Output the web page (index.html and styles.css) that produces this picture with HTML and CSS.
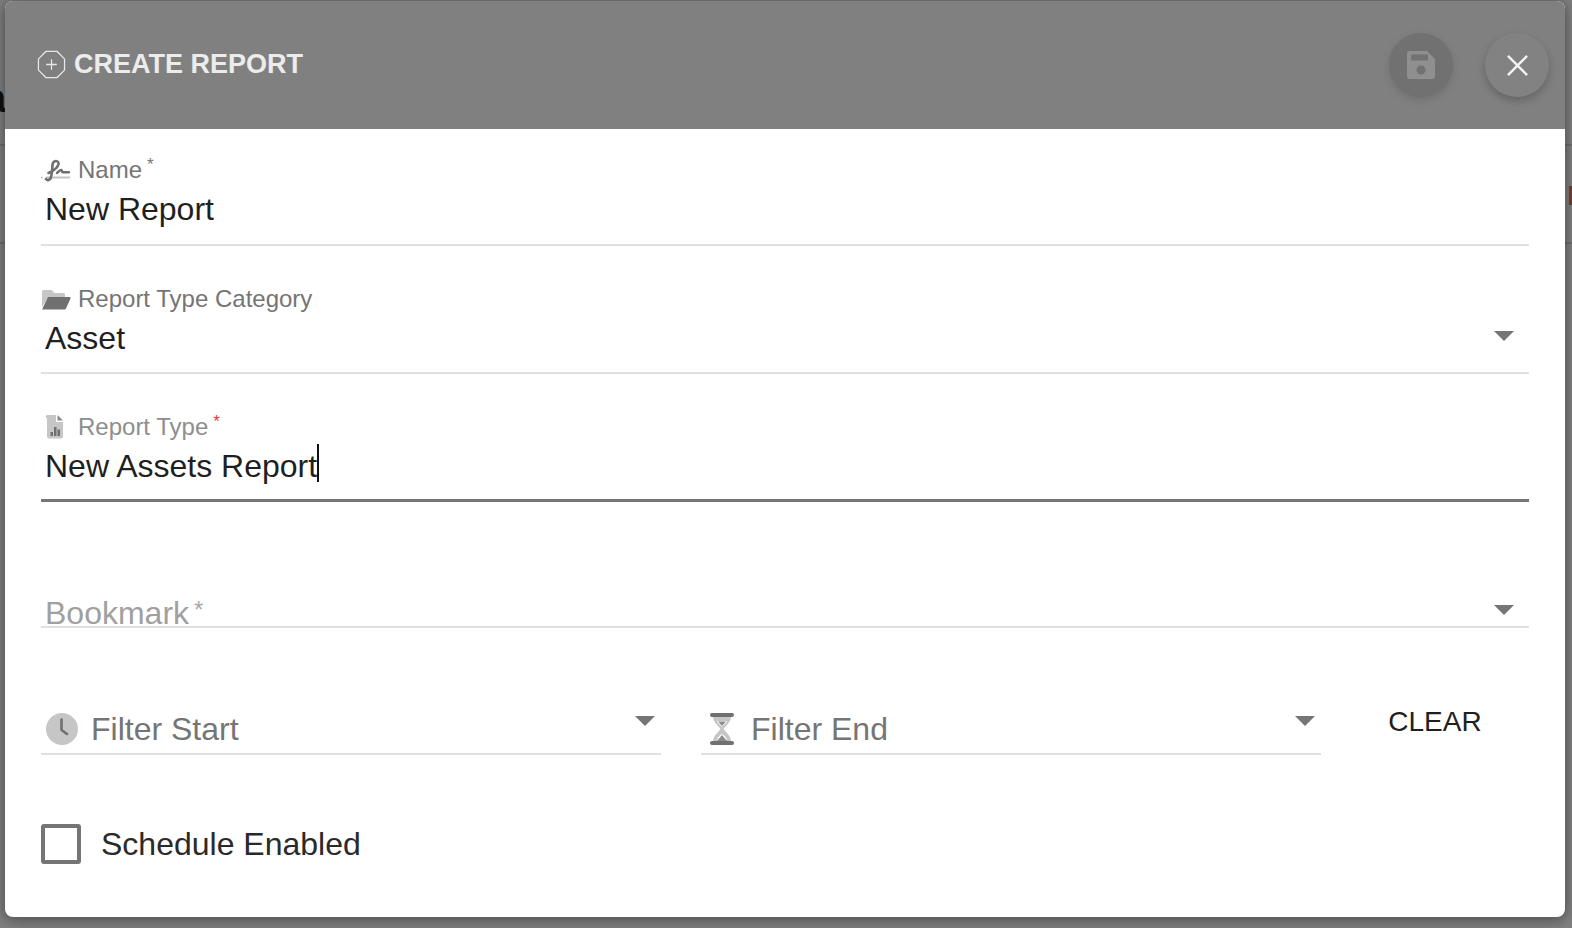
FILE: index.html
```html
<!DOCTYPE html>
<html lang="en">
<head>
<meta charset="utf-8">
<title>Create Report</title>
<link rel="stylesheet" href="styles.css">
</head>
<body>
<div class="behind" aria-hidden="true">
  <span class="sliver line-a"></span>
  <span class="sliver line-b"></span>
  <span class="sliver glyph-left">a</span>
  <span class="sliver glyph-left-2">e</span>
  <span class="sliver glyph-right">E</span>
</div>
<main class="dialog">
  <header class="dialog-head">
    <h1 class="title">
      <svg class="title-icon" viewBox="0 0 30 30"><path d="M9.2 1.5h11.6l7.7 7.7v11.6l-7.7 7.7H9.2l-7.700-7.700V9.200z" fill="none" stroke="#e8e8e8" stroke-width="1.300"/><path d="M15 9.500v11M9.500 15h11" fill="none" stroke="#e8e8e8" stroke-width="1.300"/></svg>
      CREATE REPORT
    </h1>
    <div class="head-actions">
      <button class="round save" type="button" aria-label="Save">
        <svg viewBox="0 0 28 28" class="save-icon"><path d="M3 0h17l8 8v17a3 3 0 0 1-3 3H3a3 3 0 0 1-3-3V3a3 3 0 0 1 3-3z" fill="#8f8f8f"/><rect x="4" y="3.500" width="17" height="6" rx="1" fill="#727272"/><circle cx="14" cy="19" r="4.500" fill="#727272"/></svg>
      </button>
      <button class="round close" type="button" aria-label="Close">
        <svg viewBox="0 0 22 22" class="close-icon"><path d="M1 1l20 20M21 1L1 21" stroke="#f2f2f2" stroke-width="2.600" fill="none"/></svg>
      </button>
    </div>
  </header>
  <form class="form">
    <div class="field">
      <div class="label">
        <svg class="label-icon" viewBox="0 0 30 24"><path d="M0 19.500h1.500" stroke="#aaa" stroke-width="1.500"/><path d="M5 19.500h24" stroke="#c4c4c4" stroke-width="2"/><path d="M5 21c2 2.500 5 .5 5.500-4 .4-4 1-8 1-10 0-3 2.800-4.800 5-3.500 2 1.200 1 4-1.200 6.500-2 2.300-5.200 4-7.800 5" fill="none" stroke="#707070" stroke-width="2.600" stroke-linecap="round"/><path d="M16 15c2-1.500 3-3.500 4.500-3 1 .4 0 2.200 1.200 2.200H28" fill="none" stroke="#707070" stroke-width="2.400" stroke-linecap="round"/></svg>
        <span>Name<sup class="req">*</sup></span>
      </div>
      <div class="value">New Report</div>
    </div>
    <div class="field">
      <div class="label">
        <svg class="label-icon" viewBox="0 0 30 24"><path d="M1 20V4.500A1.500 1.500 0 0 1 2.500 3h8l3 3h9A1.500 1.500 0 0 1 24 7.500V10H7.500z" fill="#c6c6c6"/><path d="M7 10h21.500c.8 0 1.300.8 1 1.500L25 21.500c-.3.600-.8 1-1.500 1H1z" fill="#707070"/></svg>
        <span>Report Type Category</span>
      </div>
      <div class="value">Asset<span class="arrow"></span></div>
    </div>
    <div class="field focused">
      <div class="label faded">
        <svg class="label-icon" viewBox="0 0 30 24"><path d="M6 3.500A1.500 1.500 0 0 1 7.500 0H15v7h7v14.500a2 2 0 0 1-2 2H8a2 2 0 0 1-2-2z" fill="#c6c6c6"/><path d="M16.500 0L22 5.500h-5.500z" fill="#8a8a8a"/><path d="M9.500 17h2.500v4H9.500zM13 12h2.500v9H13zM16.500 14.500H19V21h-2.500z" fill="#707070"/></svg>
        <span>Report Type<sup class="req red">*</sup></span>
      </div>
      <div class="value"><span class="caret">New Assets Report</span></div>
    </div>
    <div class="field placeholder-field">
      <div class="value placeholder">Bookmark<sup class="req big">*</sup><span class="arrow"></span></div>
    </div>
    <div class="filters">
      <div class="filter">
        <svg class="filter-icon" viewBox="0 0 32 32"><circle cx="16" cy="16" r="16" fill="#c6c6c6"/><path d="M15.500 6.500V17l5.500 4" fill="none" stroke="#707070" stroke-width="2.600" stroke-linecap="round" stroke-linejoin="round"/></svg>
        <span class="filter-text">Filter Start</span>
        <span class="arrow"></span>
      </div>
      <div class="filter">
        <svg class="filter-icon hour" viewBox="0 0 24 32"><path d="M3 3c0 7 5.500 9.500 7.500 13C8.500 19.500 3 22 3 29h18c0-7-5.500-9.500-7.500-13C15.500 12.500 21 10 21 3z" fill="#c6c6c6"/><path d="M7 8h10c-1 2.500-3.500 4-5 6-1.500-2-4-3.500-5-6z M12 21c-2 1-4 3-5 6h10c-1-3-3-5-5-6z" fill="#fff"/><path d="M8 8.500h8l-4 4.500z M12 22l5 6H7z" fill="#8c8c8c"/><rect x="0" y="0" width="24" height="4" rx="2" fill="#707070"/><rect x="0" y="28" width="24" height="4" rx="2" fill="#707070"/></svg>
        <span class="filter-text">Filter End</span>
        <span class="arrow"></span>
      </div>
      <button class="clear" type="button">CLEAR</button>
    </div>
    <label class="check">
      <span class="box"></span>
      <span>Schedule Enabled</span>
    </label>
  </form>
</main>
</body>
</html>
```

FILE: styles.css
```css
* { box-sizing: border-box; }
html, body { margin: 0; height: 100%; }
body {
  position: relative;
  overflow: hidden;
  height: 928px;
  padding: 1px 7px 0 5px;
  background: #808080;
  font-family: "Liberation Sans", Arial, sans-serif;
  color: #1f1f1f;
}
.behind { position: absolute; inset: 0; overflow: hidden; }
.sliver { position: absolute; }
.line-a, .line-b { left: 0; right: 0; height: 2px; background: #6f6f6f; }
.line-a { top: 144px; }
.line-b { top: 242px; }
.glyph-left { left: -16px; top: 76px; font-size: 40px; font-weight: 700; color: #111; }
.glyph-left-2 { left: -15px; top: 205px; font-size: 28px; color: #333; }
.glyph-right { right: -14px; top: 180px; font-size: 28px; font-weight: 700; color: #7c3b3b; }

.dialog {
  position: relative;
  height: 916px;
  border-radius: 8px;
  background: #fff;
  overflow: hidden;
  box-shadow: 0 0 14px rgba(0, 0, 0, .35), 0 6px 14px rgba(0, 0, 0, .15);
}
.dialog-head {
  display: flex;
  align-items: center;
  justify-content: space-between;
  height: 128px;
  padding: 0 16px 0 32px;
  background: #808080;
}
.title {
  display: flex;
  align-items: center;
  gap: 8px;
  margin: 0 0 2px;
  font-size: 27px;
  font-weight: 700;
  color: #ececec;
}
.title-icon { width: 29px; height: 29px; }
.head-actions { display: flex; gap: 32px; }
.round {
  display: flex;
  align-items: center;
  justify-content: center;
  width: 64px;
  height: 64px;
  padding: 0;
  border: 0;
  border-radius: 50%;
}
.save { background: #717171; box-shadow: 0 3px 8px rgba(0, 0, 0, .12); }
.close { background: #828282; box-shadow: 0 4px 9px rgba(0, 0, 0, .22); }
.save-icon { width: 28px; height: 28px; }
.close-icon { width: 21px; height: 21px; }

.form { padding: 0 36px; }
.field {
  position: relative;
  height: 116px;
  margin-bottom: 12px;
  padding-top: 27px;
  border-bottom: 2px solid #e0e0e0;
}
.form .field:first-child { height: 117px; margin-top: 0; }
.focused { border-bottom: 3px solid #757575; height: 116px; margin-bottom: 11px; }
.placeholder-field { padding-top: 77px; height: 115px; margin-bottom: 0; }
.label {
  display: flex;
  align-items: center;
  gap: 7px;
  height: 28px;
  font-size: 24px;
  line-height: 28px;
  color: #757575;
}
.faded { color: #8e8e8e; }
.label-icon { flex: none; width: 30px; height: 24px; }
.req { margin-left: 5px; font-size: 17px; line-height: 0; vertical-align: 8px; }
.red { color: #e53935; }
.big { font-size: 24px; color: #a8a8a8; vertical-align: 6px; }
.value {
  position: relative;
  height: 46px;
  margin-top: 3px;
  padding: 0 0 0 4px;
  font-size: 32px;
  line-height: 44px;
}
.placeholder-field .value { margin-top: 0; line-height: 46px; color: #a0a0a0; }
.placeholder { height: 36px; }
.caret { display: inline-block; height: 38px; line-height: 44px; border-right: 2px solid #111; padding-right: 0; }
.arrow {
  width: 0;
  height: 0;
  border-left: 10px solid transparent;
  border-right: 10px solid transparent;
  border-top: 10px solid #757575;
}
.value .arrow { position: absolute; right: 15px; top: 15px; }
.filters {
  display: flex;
  align-items: flex-start;
  gap: 40px;
  margin-top: 0;
  padding-top: 78px;
  height: 127px;
}
.filter {
  position: relative;
  display: flex;
  align-items: center;
  gap: 13px;
  flex: none;
  width: 620px;
  height: 49px;
  padding: 0 0 2px 5px;
  border-bottom: 2px solid #e0e0e0;
}
.filter .arrow { position: absolute; right: 6px; top: 10px; }
.filter-icon { flex: none; width: 32px; height: 32px; }
.hour { width: 24px; margin: 0 4px; }
.filter-text { font-size: 32px; line-height: 44px; color: #757575; }
.clear {
  flex: none;
  width: 148px;
  height: 36px;
  margin-top: -2px;
  padding: 0;
  border: 0;
  background: none;
  font: 400 28px/36px "Liberation Sans", Arial, sans-serif;
  color: #1f1f1f;
}
.check {
  display: flex;
  align-items: center;
  gap: 20px;
  margin-top: 69px;
  font-size: 32px;
  line-height: 40px;
  color: #2a2a2a;
}
.box {
  flex: none;
  width: 40px;
  height: 40px;
  border: 4px solid #757575;
  border-radius: 3px;
}
```
